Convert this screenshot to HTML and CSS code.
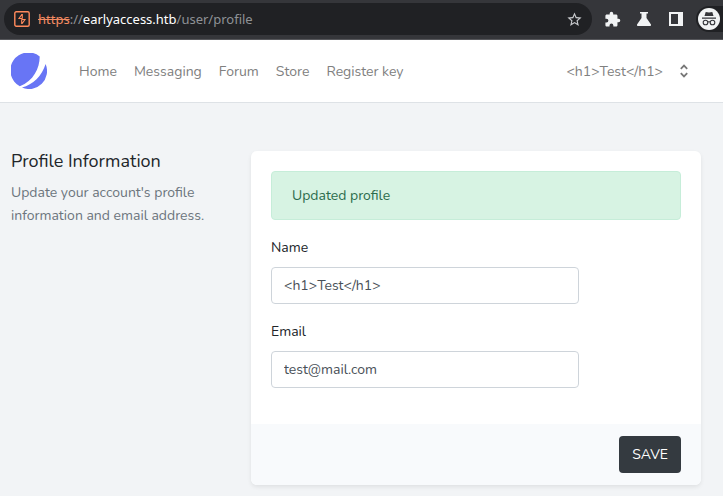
FILE: index.html
```html
<!DOCTYPE html>
<html lang="en">
<head>
<meta charset="utf-8">
<meta name="viewport" content="width=device-width, initial-scale=1">
<title>Profile</title>
<link rel="stylesheet" href="styles.css">
</head>
<body>
<div class="toolbar">
  <div class="address">
    <svg class="site-icon" viewBox="0 0 16 16" width="16" height="16" aria-hidden="true"><rect x=".8" y=".8" width="14.4" height="14.4" rx="1.5" fill="none" stroke="#ff8a5c" stroke-width="1.4"/><path d="M8 3.200 5 7.500H8.500M8 12.800 11 8.500H7.500M8.300 3V7.500M7.700 13V8.500" fill="none" stroke="#ff8a5c" stroke-width="1.100"/></svg>
    <span class="url"><s>https</s>://<b>earlyaccess.htb</b>/user/profile</span>
    <button class="tool" type="button" aria-label="Bookmark"><svg viewBox="0 0 24 24" width="17" height="17"><path fill="#c8cacd" d="m22 9.24-7.19-.62L12 2 9.19 8.63 2 9.24l5.46 4.73L5.82 21 12 17.27 18.18 21l-1.63-7.03L22 9.24zM12 15.4l-3.76 2.27 1-4.28-3.32-2.88 4.38-.38L12 6.1l1.71 4.04 4.38.38-3.32 2.88 1 4.28L12 15.4z"/></svg></button>
  </div>
  <div class="tools">
    <button class="tool" type="button" aria-label="Extensions"><svg viewBox="0 0 24 24" width="17" height="17"><path fill="#f1f3f4" d="M20.5 11H19V7c0-1.1-.9-2-2-2h-4V3.5a2.5 2.5 0 0 0-5 0V5H4c-1.1 0-2 .9-2 2v3.8h1.5a2.7 2.7 0 0 1 0 5.4H2V20c0 1.1.9 2 2 2h3.8v-1.5a2.7 2.7 0 0 1 5.4 0V22H17c1.100 0 2-.9 2-2v-4h1.5a2.5 2.5 0 0 0 0-5z"/></svg></button>
    <button class="tool" type="button" aria-label="Labs"><svg viewBox="0 0 16 16" width="16" height="16"><path fill="#f1f3f4" d="M4 1H12V2.600H10.500V7L15 13.500Q15.400 15 14 15H2Q.6 15 1 13.500L5.500 7V2.600H4Z"/></svg></button>
    <button class="tool" type="button" aria-label="Side panel"><svg viewBox="0 0 16 16" width="16" height="16"><path fill="#f1f3f4" fill-rule="evenodd" d="M1 1H15V15H1ZM3 3V13H10V3Z"/></svg></button>
  </div>
  <span class="incognito"><svg viewBox="0 0 24 24" width="24" height="24" role="img" aria-label="Incognito"><circle cx="12" cy="12" r="11" fill="#f1f3f4"/><path fill="#35363a" d="M8.700 5 12 5.600 15.300 5 16.500 9H7.500ZM5 10.500H19V11.700H5Z"/><g fill="none" stroke="#35363a" stroke-width="1.100"><circle cx="8.500" cy="15.500" r="2.300"/><circle cx="15.500" cy="15.500" r="2.300"/><path d="M10.800 15.100Q12 14.500 13.200 15.100"/></g></svg></span>
</div>
<header class="navbar">
  <a class="brand" href="#" aria-label="Dashboard"><svg viewBox="0 0 36 36" width="36" height="36"><path fill="#6875f5" d="M8.800 33.300A18 18 0 1 1 28.700 3.500C28.800 15 22.500 28 8.800 33.300ZM11 34.600C22 31.500 31 23 34.600 11A18 18 0 0 1 11 34.600Z"/></svg></a>
  <nav class="links">
    <a href="#">Home</a><a href="#">Messaging</a><a href="#">Forum</a><a href="#">Store</a><a href="#">Register key</a>
  </nav>
  <button class="account" type="button"><span>&lt;h1&gt;Test&lt;/h1&gt;</span><svg viewBox="0 0 10 14" width="10" height="14" aria-hidden="true"><path d="M1.800 4.800 5 1.600 8.200 4.800M1.800 9.200 5 12.400 8.200 9.200" fill="none" stroke="#777" stroke-width="1.800"/></svg></button>
</header>
<main class="page">
  <section class="intro">
    <h1>Profile Information</h1>
    <p>Update your account's profile information and email address.</p>
  </section>
  <form class="card">
    <div class="card-body">
      <div class="alert" role="status">Updated profile</div>
      <div class="field"><label for="name">Name</label><input id="name" type="text" value="&lt;h1&gt;Test&lt;/h1&gt;"></div>
      <div class="field"><label for="email">Email</label><input id="email" type="email" value="test@mail.com"></div>
    </div>
    <div class="card-footer"><button class="save" type="button">SAVE</button></div>
  </form>
</main>
</body>
</html>
```
FILE: styles.css
```css
* { box-sizing: border-box; }
body {
  margin: 0;
  min-height: 100vh;
  overflow-x: hidden;
  background: #f2f4f6;
  color: #212529;
  font: 14px/23px Nunito, Lato, sans-serif;
}
button, input { font: inherit; }
button { cursor: pointer; }
svg { display: block; }

.toolbar {
  display: flex;
  align-items: center;
  gap: 10px;
  height: 40px;
  padding: 0 0 1px 4px;
  background: #35363a;
  border-bottom: 1px solid #56575b;
}
.address {
  flex: 1;
  display: flex;
  align-items: center;
  height: 32px;
  padding: 0 8px 0 10px;
  border-radius: 16px;
  background: #202124;
}
.url {
  flex: 1;
  margin-left: 8px;
  color: #8f9296;
  font: 13px/20px "Noto Sans", sans-serif;
}
.url s { color: #f28b62; }
.url b { color: #fff; font-weight: 400; }
.tool {
  display: grid;
  place-items: center;
  width: 20px;
  height: 24px;
  padding: 0;
  border: 0;
  background: none;
}
.tools { display: flex; align-items: center; gap: 12px; }
.incognito {
  padding: 1px 2px 1px 1px;
  border-radius: 13px 0 0 13px;
  background: #202124;
}

.navbar {
  display: flex;
  align-items: center;
  height: 63px;
  padding: 0 34px 0 11px;
  background: #fff;
  border-bottom: 1px solid #dee2e6;
}
.links { display: flex; gap: 17px; margin-left: 32px; }
.links a { color: #808080; text-decoration: none; white-space: nowrap; }
.account {
  display: flex;
  align-items: center;
  gap: 16px;
  margin-left: auto;
  padding: 0;
  border: 0;
  background: none;
  color: #808080;
}

.page {
  display: grid;
  grid-template-columns: 218fr 450fr;
  gap: 22px;
  align-items: start;
  padding: 48px 22px 10px 11px;
}
.intro h1 { margin: 0 0 10px; font-size: 18px; line-height: 20px; font-weight: 400; }
.intro p { margin: 0; color: #6c757d; }
.card {
  border-radius: 6px;
  background: #fff;
  box-shadow: 0 2px 4px rgba(0, 0, 0, .08);
  overflow: hidden;
}
.card-body { padding: 20px 20px 36px; }
.alert {
  margin-bottom: 16px;
  padding: 12px 20px;
  border: 1px solid #c6edd9;
  border-radius: 4px;
  background: #d7f3e3;
  color: #2b6b4c;
}
.field + .field { margin-top: 16px; }
.field label { display: block; margin-bottom: 8px; }
.field input {
  display: block;
  width: 75%;
  height: 37px;
  padding: 6px 12px;
  border: 1px solid #ced4da;
  border-radius: 4px;
  background: #fff;
  color: #495057;
}
.card-footer {
  display: flex;
  justify-content: flex-end;
  padding: 12px 20px;
  background: #f8fafc;
}
.save {
  height: 37px;
  padding: 0 13px;
  border: 0;
  border-radius: 4px;
  background: #343a40;
  color: #fff;
}
```
